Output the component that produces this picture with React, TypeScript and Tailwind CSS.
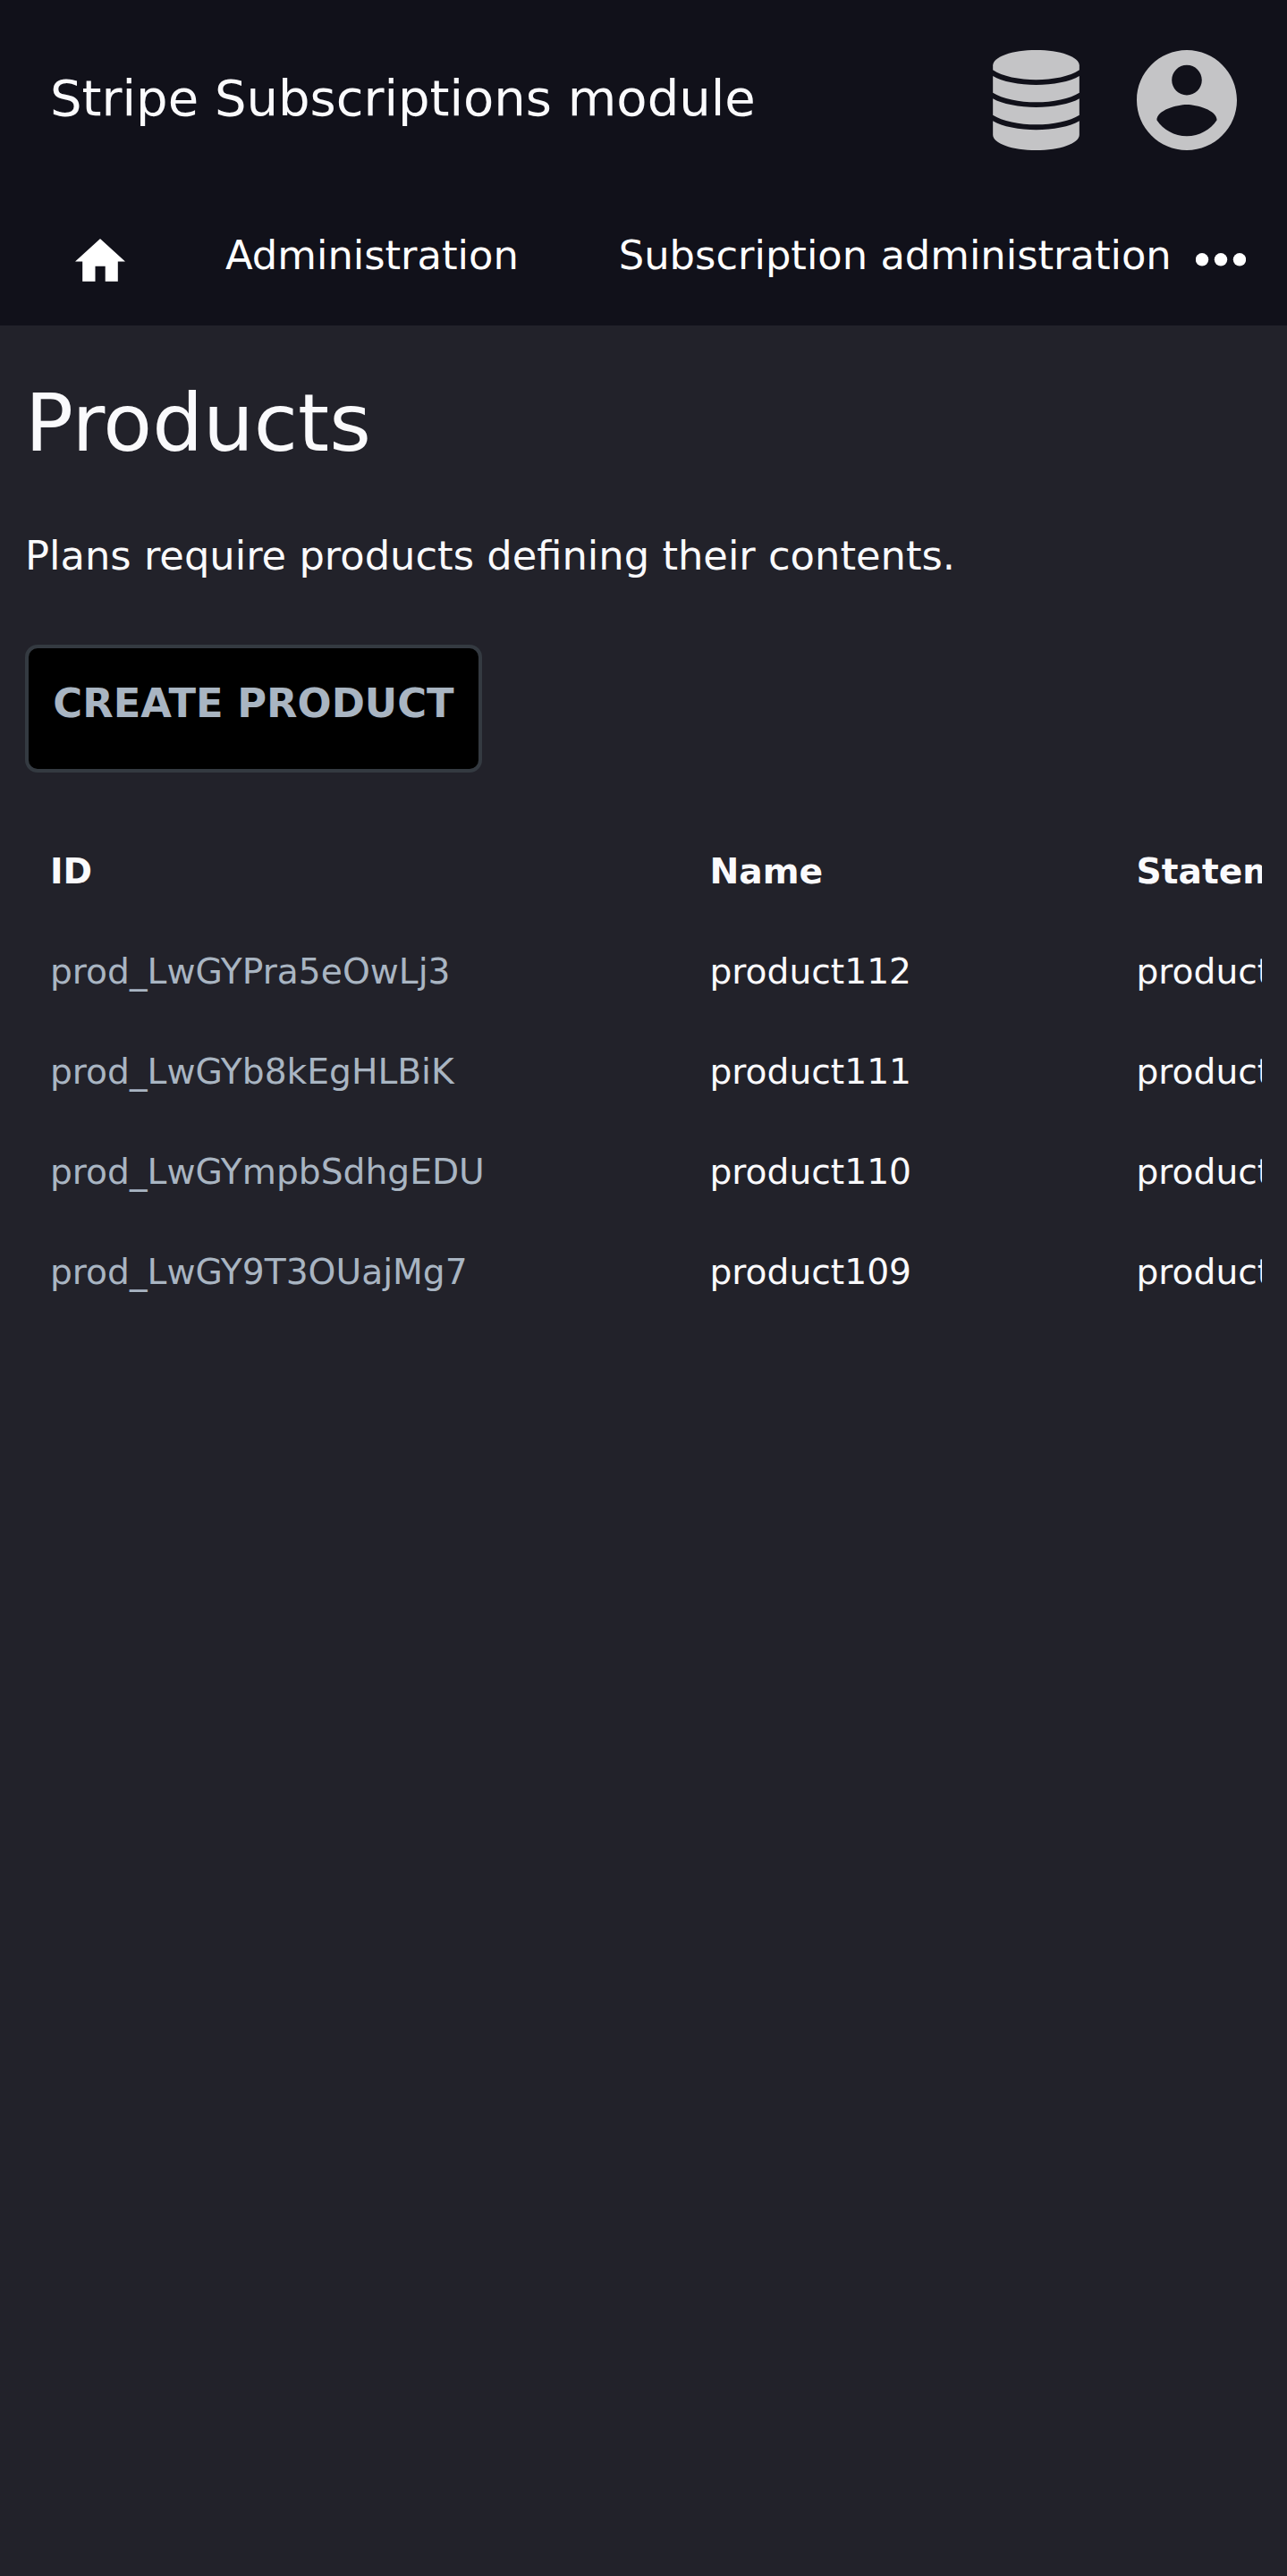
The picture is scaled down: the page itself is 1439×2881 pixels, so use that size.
const rows = [
  ["prod_LwGYPra5eOwLj3", "product112"],
  ["prod_LwGYb8kEgHLBiK", "product111"],
  ["prod_LwGYmpbSdhgEDU", "product110"],
  ["prod_LwGY9T3OUajMg7", "product109"],
];

function DatabaseIcon() {
  return (
    <svg className="h-[112px] w-[97px] fill-[#c4c4c6]" viewBox="0 0 290 336">
      <path d="M0 52C0 22 65 0 145 0s145 22 145 52v15c-30 21-90 33-145 33S30 88 0 67z" />
      <path d="M0 87c30 19 90 30 145 30s115-11 145-30v56c-30 20-90 32-145 32S30 163 0 143z" />
      <path d="M0 163c30 18 90 29 145 29s115-11 145-29v55c-30 20-90 32-145 32S30 238 0 218z" />
      <path d="M0 238c30 19 90 30 145 30s115-11 145-30v46c0 29-65 52-145 52S0 313 0 284z" />
    </svg>
  );
}

function AccountIcon() {
  return (
    <svg className="h-[112px] w-[112px] fill-[#c4c4c6]" viewBox="2 2 20 20">
      <path d="M12 2C6.48 2 2 6.48 2 12s4.48 10 10 10 10-4.48 10-10S17.52 2 12 2zm0 3c1.66 0 3 1.34 3 3s-1.34 3-3 3-3-1.34-3-3 1.34-3 3-3zm0 14.2c-2.5 0-4.71-1.28-6-3.22.03-1.99 4-3.08 6-3.08 1.99 0 5.97 1.09 6 3.08-1.29 1.94-3.5 3.22-6 3.22z" />
    </svg>
  );
}

export default function App() {
  return (
    <div className="h-[2881px] w-[1439px] overflow-hidden bg-[#22222a] font-['DejaVu_Sans',sans-serif] text-[#fafafc]">
      <header className="h-[364px] bg-[#11111a]">
        <div className="flex h-56 items-center px-14">
          <h1 className="grow whitespace-nowrap pb-[5px] text-[56px] leading-[83px]">Stripe Subscriptions module</h1>
          <div className="flex gap-16">
            <DatabaseIcon />
            <AccountIcon />
          </div>
        </div>
        <nav className="flex h-[140px] items-start whitespace-nowrap pl-[84px] pt-7 text-[44.8px] leading-[67px] text-white">
          <svg className="mt-[14.5px] h-12 w-14 fill-white" viewBox="0 0 56 48">
            <path d="M28 0L56 25.4h-8.2v22.4H33.7V30.8H22.5v17H8.2V25.4H0z" />
          </svg>
          <span className="ml-28">Administration</span>
          <span className="ml-28">Subscription administration</span>
          <svg className="ml-[27.2px] mt-[30px] h-4 w-14 fill-white" viewBox="0 0 56 16">
            <circle cx="7" cy="8.3" r="7.2" />
            <circle cx="28" cy="8.3" r="7.2" />
            <circle cx="49" cy="8.3" r="7.2" />
          </svg>
        </nav>
      </header>
      <main className="px-7 pt-[55px]">
        <h2 className="text-[89.6px] leading-[108px]">Products</h2>
        <p className="mt-[61px] text-[44.8px] leading-[67px]">Plans require products defining their contents.</p>
        <button className="mt-[66px] flex h-[143px] w-[511px] items-start justify-center whitespace-nowrap rounded-[14px] border-4 border-[#343a41] bg-black pt-7 text-[44.8px] font-bold leading-[67px] text-[#a9b5c2]">
          CREATE PRODUCT
        </button>
        <div className="mt-[55px] overflow-hidden text-[39.2px] leading-[111px]">
          <div className="grid h-28 w-[1800px] grid-cols-[737.5px_477px_1fr] font-bold">
            <span className="pl-7">ID</span>
            <span className="pl-7">Name</span>
            <span className="pl-7">Statement descriptor</span>
          </div>
          {rows.map(([id, name]) => (
            <div key={id} className="grid h-28 w-[1800px] grid-cols-[737.5px_477px_1fr]">
              <span className="pl-7 text-[#a9b5c2]">{id}</span>
              <span className="pl-7">{name}</span>
              <span className="pl-7">{name}</span>
            </div>
          ))}
        </div>
      </main>
    </div>
  );
}
